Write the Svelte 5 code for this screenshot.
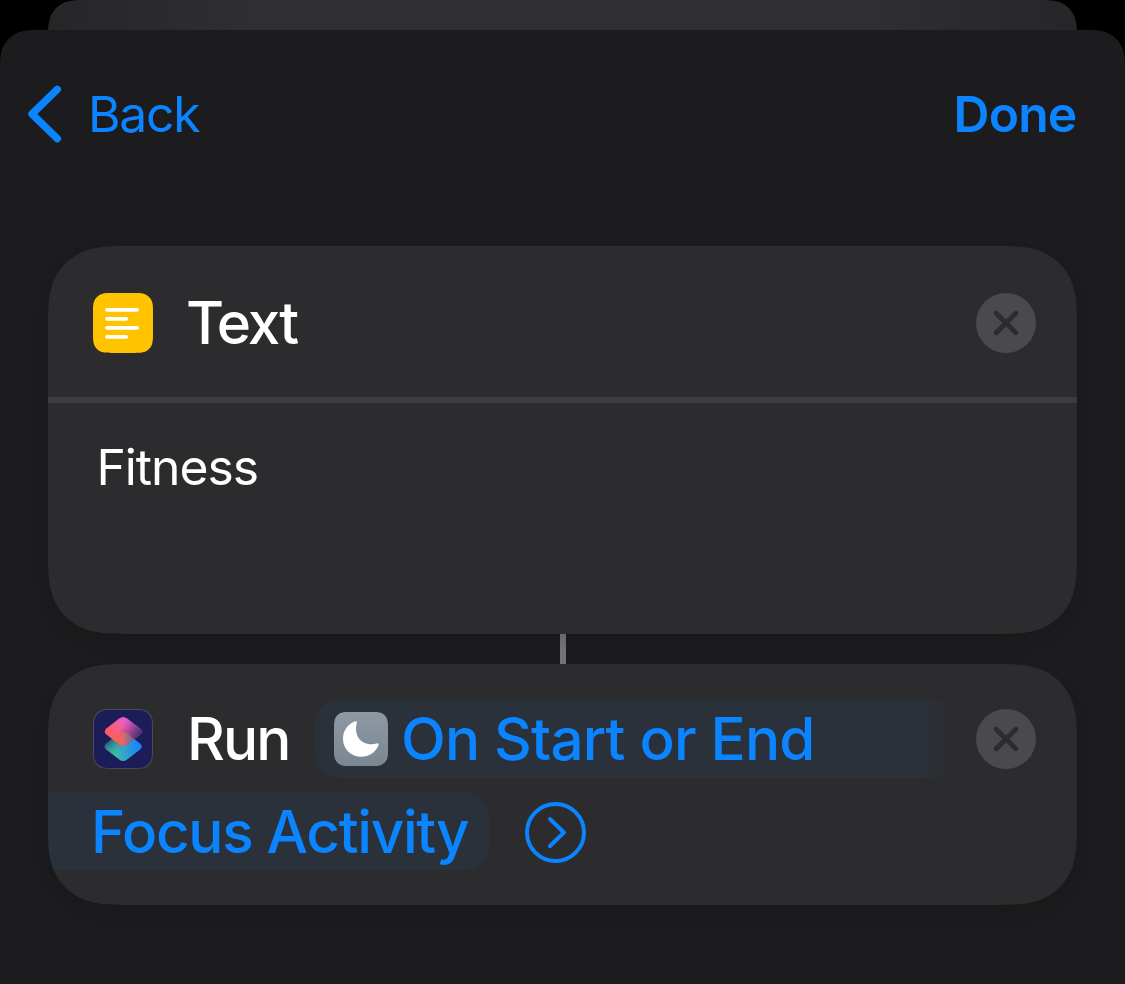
<script>
  // Continuous-curvature rounded rectangle outline.
  function squircle(w, h, r) {
    const k = [1.52866, 1.08849, 0.86841, 0.66993, 0.63149, 0.37282, 0.16906, 0.07491, 0.06549].map((v) => v * r);
    const [a, b, c, d, e, f, g, i, j] = k;
    return (
      `M${a} 0L${w - a} 0C${w - b} 0 ${w - c} 0 ${w - d} ${j}L${w - e} ${i}` +
      `C${w - f} ${g} ${w - g} ${f} ${w - i} ${e}L${w - j} ${d}C${w} ${c} ${w} ${b} ${w} ${a}` +
      `L${w} ${h - a}C${w} ${h - b} ${w} ${h - c} ${w - j} ${h - d}L${w - i} ${h - e}` +
      `C${w - g} ${h - f} ${w - f} ${h - g} ${w - e} ${h - i}L${w - d} ${h - j}C${w - c} ${h} ${w - b} ${h} ${w - a} ${h}` +
      `L${a} ${h}C${b} ${h} ${c} ${h} ${d} ${h - j}L${e} ${h - i}` +
      `C${f} ${h - g} ${g} ${h - f} ${i} ${h - e}L${j} ${h - d}C0 ${h - c} 0 ${h - b} 0 ${h - a}` +
      `L0 ${a}C0 ${b} 0 ${c} ${j} ${d}L${i} ${e}C${g} ${f} ${f} ${g} ${e} ${i}L${d} ${j}C${c} 0 ${b} 0 ${a} 0Z`
    );
  }
  const clip = (w, h, r) => `path("${squircle(w, h, r)}")`;

  // Rounded rhombus centred on the origin, used for both layers of the app icon.
  const rhombus =
    'M-4 -13Q0 -16 4 -13L16.5 -3.3Q20.6 0 16.5 3.3L4 13Q0 16 -4 13L-16.5 3.3Q-20.6 0 -16.5 -3.3Z';
</script>

{#snippet remove()}
  <button class="remove" aria-label="Remove">
    <svg width="60" height="60" viewBox="0 0 60 60">
      <circle cx="30" cy="30" r="30" fill="#4a4a4c" />
      <path d="M20.2 20.2L39.8 39.8M39.8 20.2L20.2 39.8" stroke="#2c2c2e" stroke-width="4.8" stroke-linecap="round" />
    </svg>
  </button>
{/snippet}

<div class="screen">
  <div class="behind" style:clip-path={clip(1029, 120, 28)}></div>
  <main class="sheet" style:clip-path={clip(1125, 1100, 30)}>
    <nav>
      <button class="back">
        <svg width="36" height="60" viewBox="0 0 36 60" fill="none">
          <path d="M30.3 5.3L5 30L30.3 54.7" stroke="#0a84ff" stroke-width="7.4" stroke-linecap="round" stroke-linejoin="round" />
        </svg>
        <span>Back</span>
      </button>
      <button class="done">Done</button>
    </nav>

    <div class="shadow">
      <section class="card text-card" style:clip-path={clip(1029, 388, 60)}>
        <header>
          <svg width="60" height="60" viewBox="0 0 60 60">
            <path d={squircle(60, 60, 13.5)} fill="#ffc300" />
            <path d="M14 16.8H44M14 25.8H33.2M14 34.8H44M14 43.8H33.2" stroke="#fff" stroke-width="3.8" stroke-linecap="round" />
          </svg>
          <h2><span class="cap">T</span>ext</h2>
          {@render remove()}
        </header>
        <p>Fitness</p>
      </section>
    </div>

    <div class="connector"></div>

    <div class="shadow">
      <section class="card run-card" style:clip-path={clip(1029, 241, 60)}>
        <div class="line first">
          <svg width="60" height="60" viewBox="0 0 60 60">
            <defs>
              <linearGradient id="low" x1="-14" y1="8" x2="17" y2="-4" gradientUnits="userSpaceOnUse">
                <stop offset="0" stop-color="#3fc8a0" />
                <stop offset=".5" stop-color="#2f9fd0" />
                <stop offset="1" stop-color="#1482ff" />
              </linearGradient>
              <linearGradient id="lowShade" x1="-16" y1="-5" x2="-2" y2="9" gradientUnits="userSpaceOnUse">
                <stop offset="0" stop-color="#1f4a78" stop-opacity=".9" />
                <stop offset="1" stop-color="#43dc9c" stop-opacity="0" />
              </linearGradient>
              <linearGradient id="high" x1="-16" y1="6" x2="4" y2="-12" gradientUnits="userSpaceOnUse">
                <stop offset="0" stop-color="#ff5d4d" />
                <stop offset=".45" stop-color="#fa5e86" />
                <stop offset="1" stop-color="#e45fd2" />
              </linearGradient>
              <linearGradient id="highShade" x1="0" y1="-8" x2="16" y2="2" gradientUnits="userSpaceOnUse">
                <stop offset="0" stop-color="#6b3779" stop-opacity="0" />
                <stop offset="1" stop-color="#55306f" />
              </linearGradient>
              <linearGradient id="overlap" x1="-10" y1="0" x2="12" y2="0" gradientUnits="userSpaceOnUse">
                <stop offset="0" stop-color="#ff5f55" />
                <stop offset=".45" stop-color="#e0686c" />
                <stop offset="1" stop-color="#5468b0" />
              </linearGradient>
              <clipPath id="lowClip"><path transform="translate(0 15)" d={rhombus} /></clipPath>
            </defs>
            <path d={squircle(60, 60, 13.5)} fill="#4b4b55" />
            <path transform="translate(1 1)" d={squircle(58, 58, 12.5)} fill="#1c1c58" />
            <g transform="translate(30.2 37.5)">
              <path d={rhombus} fill="url(#low)" />
              <path d={rhombus} fill="url(#lowShade)" />
            </g>
            <g transform="translate(30.2 22.5)">
              <path d={rhombus} fill="url(#high)" />
              <path d={rhombus} fill="url(#highShade)" />
              <path clip-path="url(#lowClip)" d={rhombus} fill="url(#overlap)" />
            </g>
          </svg>
          <span class="verb">Run</span>
          <span class="token start">
            <svg width="54" height="54" viewBox="0 0 54 54">
              <defs>
                <linearGradient id="grey" x1="0" y1="0" x2="0" y2="1">
                  <stop offset="0" stop-color="#8e99a3" />
                  <stop offset="1" stop-color="#7b8790" />
                </linearGradient>
              </defs>
              <path d={squircle(54, 54, 11.5)} fill="url(#grey)" />
              <path d="M20.6 9.6C22.2 8.7 23.2 9.6 22.7 11.4C19.9 21.6 25.4 32.2 37.5 32.2C39.5 32.2 41.1 31.9 42.6 31.4C44.4 30.9 45.2 32.1 44.3 33.8C41.4 40.5 34.9 44.8 27.4 44.8C17 44.8 9 37 9 27C9 19.2 13.3 12.6 20.6 9.6Z" fill="#fff" />
            </svg>
            <span class="label">On Start or End</span>
          </span>
          {@render remove()}
        </div>
        <div class="line">
          <span class="token end">Focus Activity</span>
          <svg class="disclose" width="62" height="64" viewBox="0 0 62 64" fill="none" stroke="#0a84ff" stroke-width="4">
            <circle cx="31.5" cy="33.5" r="28.5" />
            <path d="M26 20L39.9 33.5L26 47" stroke-linecap="round" stroke-linejoin="round" />
          </svg>
        </div>
      </section>
    </div>
  </main>
</div>

<style>
  :global(body) { margin: 0; background: #000; }
  .screen {
    width: 1125px;
    height: 984px;
    overflow: hidden;
    background: #000;
    font-family: Inter, "Liberation Sans", sans-serif;
    color: #fff;
    display: grid;
    justify-items: center;
    align-items: start;
  }
  .screen > * { grid-area: 1 / 1; }
  button { border: 0; padding: 0; background: none; font: inherit; color: #0a84ff; }
  svg { display: block; flex: none; }
  span { white-space: nowrap; }
  .behind {
    width: 1029px;
    height: 120px;
    background: linear-gradient(90deg, #262628, #2f2f31 20%, #2f2f31 80%, #262628);
  }
  .sheet {
    box-sizing: border-box;
    width: 1125px;
    height: 1100px;
    margin-top: 30px;
    padding: 0 48px;
    background: #1c1c1e;
    display: flex;
    flex-direction: column;
  }
  nav {
    height: 168px;
    margin: 0 0 48px -21px;
    display: flex;
    align-items: center;
    justify-content: space-between;
    font-size: 49.8px;
  }
  .back { display: flex; align-items: center; gap: 25px; letter-spacing: -1.25px; }
  .done { font-weight: 600; letter-spacing: -0.8px; padding-right: 0.5px; }
  .shadow { filter: drop-shadow(0 8px 7px rgba(0, 0, 0, 0.09)); }
  .card { background: #2c2c2e; }
  .text-card { height: 388px; }
  header {
    box-sizing: border-box;
    height: 157px;
    padding: 3px 41px 0 45px;
    border-bottom: 6px solid #3d3d3f;
    display: flex;
    align-items: center;
  }
  h2, .verb { margin: 0; font-size: 58.4px; font-weight: 500; line-height: 72px; }
  h2 { margin-left: 33px; letter-spacing: -2px; }
  .cap { letter-spacing: -7.4px; }
  .verb { width: 102px; margin-left: 34px; letter-spacing: -1.8px; }
  .remove { margin-left: auto; flex: none; }
  p { margin: 34px 0 0 48.5px; font-size: 49.8px; line-height: 60px; letter-spacing: -1.05px; }
  .connector { width: 6px; height: 30px; margin: 0 auto; background: #737479; }
  .run-card {
    height: 241px;
    box-sizing: border-box;
    padding-top: 36px;
    display: flex;
    flex-direction: column;
    gap: 14px;
    font-size: 58.4px;
    font-weight: 500;
  }
  .line { display: flex; align-items: center; height: 78px; }
  .first { padding: 0 41px 0 45px; }
  .token {
    box-sizing: border-box;
    height: 78px;
    display: flex;
    align-items: center;
    color: #0a84ff;
    background: #2a313b;
  }
  .start {
    width: 635px;
    margin-left: 26px;
    padding-left: 19px;
    gap: 13px;
    letter-spacing: -0.78px;
    border-radius: 24px 0 0 24px;
    background: linear-gradient(90deg, #2a313b 604px, #2c2c2e 635px);
  }
  .label { line-height: 72px; }
  .end { width: 441px; padding-left: 43px; letter-spacing: -1.3px; border-radius: 0 24px 24px 0; }
  .disclose { margin-left: 35px; }
</style>
